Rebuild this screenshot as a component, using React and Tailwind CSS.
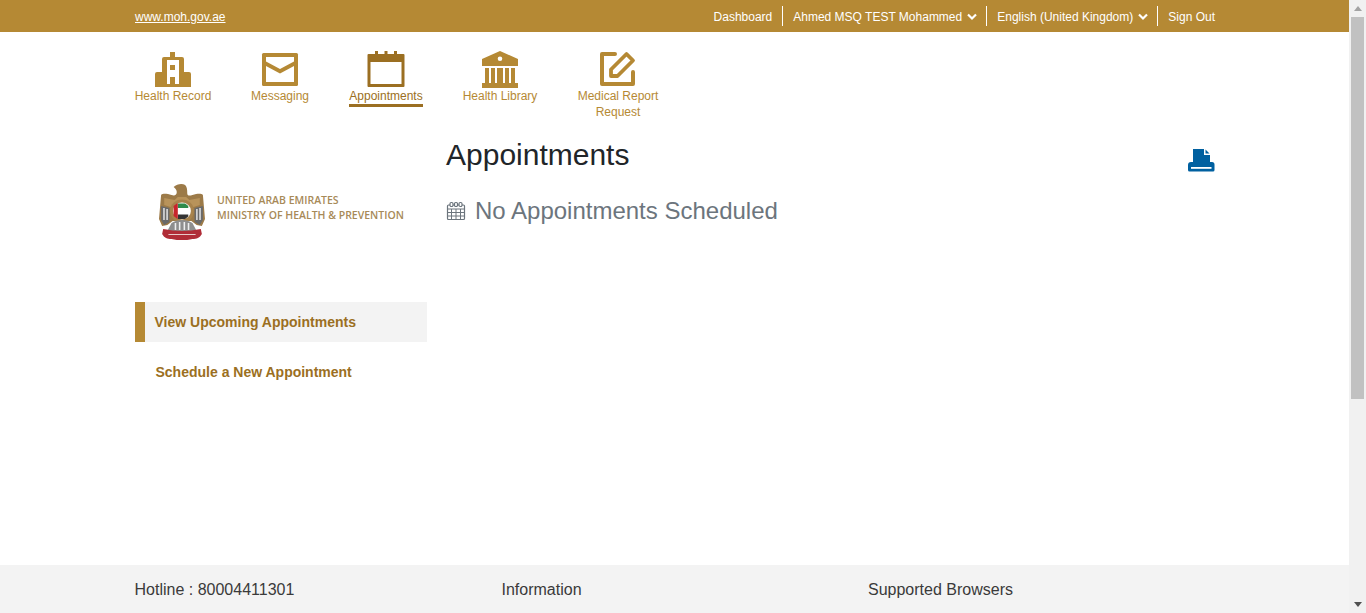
const GOLD = '#b58934';

function ChevronDown() {
  return (
    <svg width="10" height="8" viewBox="0 0 10 8" className="ml-[5px]" fill="none" stroke="#fff" strokeWidth="2.2">
      <path d="M1 1.5 L5 5.5 L9 1.5" />
    </svg>
  );
}

function HospitalIcon() {
  return (
    <svg width="38" height="38" viewBox="0 0 38 38">
      <path fill={GOLD} d="M16 2h5v5h7a2 2 0 0 1 2 2v13h5a2 2 0 0 1 2 2v13H1V24a2 2 0 0 1 2-2h5V9a2 2 0 0 1 2-2h6z" />
      <path fill="#fff" d="M13 10h12v24h-4v-7h-5v7h-3z" />
      <path fill={GOLD} d="M16 15h5v5h-5z" />
    </svg>
  );
}

function MailIcon() {
  return (
    <svg width="38" height="38" viewBox="0 0 38 38">
      <rect x="1" y="3" width="36" height="33" rx="1.500" fill={GOLD} />
      <path fill="#fff" d="M5 7h28v4.500L19 19 5 11.500zM5 16l14 7.500L33 16v16H5z" />
    </svg>
  );
}

function CalendarIcon() {
  return (
    <svg width="38" height="38" viewBox="0 0 38 38">
      <path fill="#9b6f22" d="M8 1h3v3h6.500V1h3v3H27V1h3v3h6.500a1 1 0 0 1 1 1v31a1 1 0 0 1-1 1h-35a1 1 0 0 1-1-1V5a1 1 0 0 1 1-1H8z" />
      <rect x="3.500" y="12" width="31" height="22" fill="#fff" />
    </svg>
  );
}

function LibraryIcon() {
  return (
    <svg width="38" height="38" viewBox="0 0 38 38">
      <path fill={GOLD} fillRule="evenodd" d="M19 1 L37 9V16H1V9z M19 6.500a2.300 2.300 0 1 0 0 4.600a2.300 2.300 0 0 0 0-4.600z" />
      <path fill={GOLD} d="M4 18h4v15H4zM10 18h4v15h-4zM16 18h6v15h-6zM24 18h4v15h-4zM30 18h4v15h-4zM1 33h36v5H1z" />
    </svg>
  );
}

function ReportIcon() {
  return (
    <svg width="38" height="38" viewBox="0 0 38 38">
      <path fill="none" stroke={GOLD} strokeWidth="4" strokeLinejoin="round" strokeLinecap="round" d="M16 4H3v30h31V22" />
      <path fill="none" stroke={GOLD} strokeWidth="3.800" strokeLinejoin="round" d="M27.500 4 L34 10.500 L18.500 26 L12 26 L12 19.500z" />
    </svg>
  );
}

function NavItem({ icon, label, active, className }) {
  return (
    <div className={`flex flex-col items-center ${className}`}>
      {icon}
      <span className={`text-[12px] leading-[16px] text-center whitespace-nowrap ${active ? 'text-[#9b6f22] border-b-[3px] border-[#9b6f22]' : 'text-[#b58934]'}`}>
        {label}
      </span>
    </div>
  );
}

function Emblem() {
  return (
    <svg width="46" height="60" viewBox="1 0 44 60" preserveAspectRatio="none" className="blur-[0.4px]">
      <path fill="#9c7a48" d="M15 4c3-3 8-4 11-2 2 2 2 5 2 8 0 3 2 3 5 2 4-1 8-2 10 0l2 24-3 7-5-1-5-4H14l-5 4-5 1-3-7 2-24c2-2 6-1 10 0 3 1 5 0 5-3 0-2-1-3-3-5z" />
      <path fill="#b8935a" d="M6 15l10 2 3-3h8l3 3 10-2v7l-9 3H15l-9-3z" />
      <path fill="#6a6a6a" d="M3 23l8 2v14l-5 3-3-5zM43 23l-8 2v14l5 3 3-5z" />
      <path fill="#dedede" d="M5 25h1.500v12H5zM8 26h1.500v11H8zM36.500 26H38v11h-1.500zM39.500 25H41v12h-1.500z" />
      <circle cx="23" cy="28" r="11.500" fill="#a8834c" />
      <circle cx="23" cy="28" r="8.500" fill="#fff" />
      <path fill="#2f8b4b" d="M19 20.500h7l3 2.500v2h-10z" />
      <path fill="#333" d="M19 31.500h10v2l-3 2.500h-7z" />
      <path fill="#c8252c" d="M15 23l3-2.500h1v15h-1l-3-2.500z" />
      <path fill="#8e8e8e" d="M13 40c3-2 6-3 10-3s7 1 10 3l4 8H9z" />
      <path fill="#eee" d="M16 40h1.500v7H16zM20 39h1.500v8H20zM24.500 39H26v8h-1.500zM28.500 40H30v7h-1.500z" />
      <path fill="#b02c37" d="M5 46c6 1 12 2 18 2s12-1 18-2l1 5c-2 4-5 5-9 5-3 1-7 1-10 1s-7 0-10-1c-4 0-7-1-9-5z" />
      <path fill="#e7c9c9" d="M10 51h26v1H10z" />
    </svg>
  );
}

function PrinterIcon() {
  return (
    <svg width="27" height="23" viewBox="0 0 27 23">
      <path fill="#0060a0" d="M5 0h11v6h6v8H5z" />
      <path fill="#0060a0" d="M17.500 0.500 L21.500 4.500h-4z" />
      <path fill="#0060a0" d="M3 13h21a2.500 2.500 0 0 1 2.500 2.500V21a1.500 1.500 0 0 1-1.500 1.500H1.500A1.500 1.500 0 0 1 0 21v-5a3 3 0 0 1 3-3z" />
      <rect x="3" y="18" width="20.500" height="1.800" fill="#fff" />
    </svg>
  );
}

function SmallCalendar() {
  return (
    <svg width="20" height="20" viewBox="0 0 20 20" fill="none" stroke="#6c757d" strokeWidth="1.200">
      <rect x="1.500" y="4" width="17" height="14.500" rx="1" />
      <path d="M1.500 8h17M1.500 11.500h17M1.500 15h17M5.500 8v10.500M10 8v10.500M14.500 8v10.500" strokeWidth="1" />
      <rect x="4" y="1.500" width="3" height="4" rx="1.200" fill="#fff" />
      <rect x="8.500" y="1.500" width="3" height="4" rx="1.200" fill="#fff" />
      <rect x="13" y="1.500" width="3" height="4" rx="1.200" fill="#fff" />
    </svg>
  );
}

function Scrollbar() {
  return (
    <div className="w-[17px] h-screen shrink-0 bg-[#f1f1f1] flex flex-col items-center">
      <div className="h-[17px] flex items-center justify-center">
        <svg width="8" height="5" viewBox="0 0 8 5"><path d="M4 0 L8 5 H0z" fill="#a3a3a3" /></svg>
      </div>
      <div className="w-[13px] h-[382px] bg-[#c1c1c1]" />
      <div className="flex-1" />
      <div className="h-[17px] flex items-center justify-center">
        <svg width="8" height="5" viewBox="0 0 8 5"><path d="M4 5 L8 0 H0z" fill="#505050" /></svg>
      </div>
    </div>
  );
}

export default function App() {
  return (
    <div className="flex h-screen overflow-hidden bg-white font-['Liberation_Sans',Arial,sans-serif]">
      <div className="flex-1 min-w-0 flex flex-col">
        <header className="h-[32px] bg-[#b58934] shrink-0 pl-[135px] pr-[134px] flex items-center justify-between text-white text-[12px] leading-[14px]">
          <a className="underline pt-px">www.moh.gov.ae</a>
          <div className="flex items-center">
            <span className="pr-[10px] pt-px">Dashboard</span>
            <span className="h-[20px] border-l border-white pl-[10px] pr-[9px] pt-px flex items-center">Ahmed MSQ TEST Mohammed<ChevronDown /></span>
            <span className="h-[20px] border-l border-white pl-[10px] pr-[9px] pt-px flex items-center">English (United Kingdom)<ChevronDown /></span>
            <span className="h-[20px] border-l border-white pl-[10px] pt-px flex items-center">Sign Out</span>
          </div>
        </header>

        <nav className="h-[97px] shrink-0 pl-[135px] pt-[18px] flex items-start">
          <NavItem icon={<HospitalIcon />} label="Health Record" className="w-[76px]" />
          <NavItem icon={<MailIcon />} label="Messaging" className="w-[58px] ml-[40px]" />
          <NavItem icon={<CalendarIcon />} label="Appointments" active className="w-[74px] ml-[40px]" />
          <NavItem icon={<LibraryIcon />} label="Health Library" className="w-[74px] ml-[40px]" />
          <NavItem icon={<ReportIcon />} label={<>Medical Report<br />Request</>} className="w-[82px] ml-[40px]" />
        </nav>

        <main className="flex-1 min-h-0 pl-[135px] pr-[134px] flex">
          <aside className="w-[292px] shrink-0">
            <div className="h-[173px] pt-[54px] pl-[24px] flex items-start">
              <Emblem />
              <div className="ml-[12px] mt-[10px] font-['Open_Sans',sans-serif] font-semibold text-[10.500px] leading-[15px] text-[#a78a58] whitespace-nowrap">
                <div>UNITED ARAB EMIRATES</div>
                <div>MINISTRY OF HEALTH &amp; PREVENTION</div>
              </div>
            </div>
            <div className="h-[40px] bg-[#f3f3f3] border-l-[10px] border-[#b58934] pl-[9.500px] flex items-center text-[14px] font-bold text-[#9b6f22]">
              View Upcoming Appointments
            </div>
            <div className="h-[40px] mt-[10px] pl-[20.500px] flex items-center text-[14px] font-bold text-[#9b6f22]">
              Schedule a New Appointment
            </div>
          </aside>
          <section className="flex-1 ml-[19px] relative">
            <h1 className="text-[30px] leading-[36px] text-[#212529] mt-[8px]">Appointments</h1>
            <div className="absolute right-0 top-[20px]"><PrinterIcon /></div>
            <div className="flex items-center mt-[23px]">
              <SmallCalendar />
              <span className="text-[24px] leading-[29px] text-[#6c757d] ml-[9px]">No Appointments Scheduled</span>
            </div>
          </section>
        </main>

        <footer className="h-[48px] shrink-0 bg-[#f3f3f3] pl-[134.500px] pt-[15px] grid grid-cols-[367px_366.500px_1fr] text-[16px] leading-[19px] text-[#3a3a3a]">
          <span>Hotline : 80004411301</span>
          <span>Information</span>
          <span>Supported Browsers</span>
        </footer>
      </div>
      <Scrollbar />
    </div>
  );
}
